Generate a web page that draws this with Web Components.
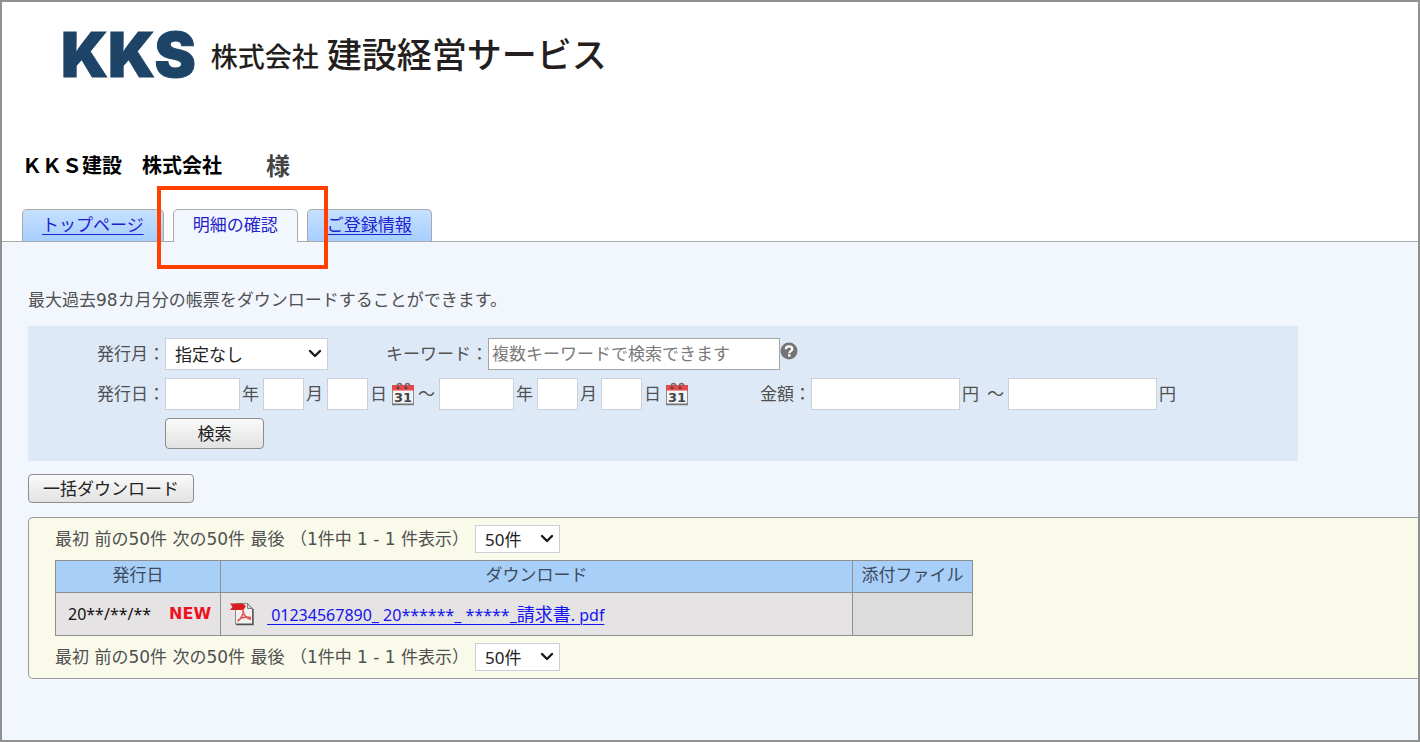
<!DOCTYPE html>
<html lang="ja">
<head>
<meta charset="utf-8">
<meta name="viewport" content="width=device-width, initial-scale=1">
<title>明細の確認</title>
<style>
  html, body { margin: 0; padding: 0; }
  body {
    --ui: "DejaVu Sans", "Noto Sans CJK JP", sans-serif;
    --latin: "Noto Sans", "Noto Sans CJK JP", sans-serif;
    font-family: var(--ui);
    font-size: 17px;
    line-height: 24px;
    color: #505050;
    background: #fff;
  }
</style>
</head>
<body>
<portal-page>
  <site-brand slot="header"></site-brand>
  <customer-name slot="header" name="ＫＫＳ建設　株式会社"></customer-name>
  <tab-bar slot="header">
    <tab-item href="#top">トップページ</tab-item>
    <tab-item href="#details" active>明細の確認</tab-item>
    <tab-item href="#account">ご登録情報</tab-item>
  </tab-bar>
  <p-note>最大過去98カ月分の帳票をダウンロードすることができます。</p-note>
  <search-panel></search-panel>
  <push-button>一括ダウンロード</push-button>
  <result-panel>
    <result-pager></result-pager>
    <result-table></result-table>
    <result-pager></result-pager>
  </result-panel>
</portal-page>

<script>
const define = (name, html, setup) => {
  const tpl = document.createElement('template');
  tpl.innerHTML = html;
  customElements.define(name, class extends HTMLElement {
    constructor() {
      super();
      this.attachShadow({ mode: 'open' }).append(tpl.content.cloneNode(true));
    }
    connectedCallback() { if (setup) setup(this, this.shadowRoot); }
  });
};

const selectCss = `
  .select { display: inline-grid; align-items: center; }
  .select > * { grid-area: 1 / 1; }
  .select svg { justify-self: end; margin-right: 6px; pointer-events: none; }
  select { appearance: none; box-sizing: border-box; margin: 0; padding: 0 9px; border: 1px solid #ccd0d6;
    border-radius: 0; background: #fff; color: #222; font: 17px var(--latin); }`;
const chevron = `<svg width="14" height="10" viewBox="0 0 14 10" aria-hidden="true"><path d="M2 2l5 5 5-5" fill="none" stroke="#1a1a1a" stroke-width="2.4" stroke-linecap="round" stroke-linejoin="round"/></svg>`;

define('portal-page', `
  <style>
    :host { display: flex; flex-direction: column; box-sizing: border-box; min-height: 100vh; border: 2px solid #919191; overflow-x: hidden; }
    header { padding: 24px 20px 0; border-bottom: 1px solid #a9a9a9; background: #fff; }
    main { flex: 1; display: flex; flex-direction: column; align-items: flex-start; padding: 46px 0 40px 26px; background: #f2f7fd; }
  </style>
  <header><slot name="header"></slot></header>
  <main><slot></slot></main>`);

define('site-brand', `
  <style>
    :host { display: flex; align-items: flex-start; padding-left: 39px; height: 64px; line-height: 60px; color: #231f20; white-space: nowrap; font-family: "Noto Sans CJK JP", sans-serif; font-weight: 500; }
    .mark { font-family: Inter, sans-serif; font-weight: 900; font-size: 62px; color: #1d4467; -webkit-text-stroke: 1px #1d4467; margin-right: 15px; }
    .kind { font-size: 27px; margin-right: 8px; }
    .name { font-size: 35px; }
    .mark, .name { line-height: 58px; }
    .name { line-height: 54px; }
  </style>
  <span class="mark">KKS</span><span class="kind">株式会社</span><span class="name">建設経営サービス</span>`);

define('customer-name', `
  <style>
    :host { display: flex; align-items: center; gap: 44px; height: 32px; margin-top: 59px; font-weight: 700; color: #000; font-family: "Noto Sans CJK JP", sans-serif; }
    .name { font-size: 20px; }
    .sama { font-size: 24px; color: #444; }
  </style>
  <span class="name"></span><span class="sama">様</span>`,
  (el, root) => { root.querySelector('.name').textContent = el.getAttribute('name'); });

define('tab-bar', `
  <style>
    :host { display: flex; gap: 9px; margin-top: 28px; }
  </style>
  <slot></slot>`);

define('tab-item', `
  <style>
    :host { display: block; position: relative; box-sizing: border-box; height: 32px; border: 1px solid #a9a9a9; border-bottom: 0;
      border-radius: 5px 5px 0 0; background: linear-gradient(#c6e0ff, #a6cfff); }
    :host([active]) { background: #f2f7fd; height: 33px; margin-bottom: -1px; }
    a { display: block; padding: 0 19px; line-height: 31px; color: #2222cc; text-decoration: underline; text-underline-offset: 3px; text-decoration-thickness: 1px; }
    :host([active]) a { text-decoration: none; }
    .mark { display: none; }
    :host([active]) .mark { display: block; position: absolute; z-index: 1; inset: -24px -31px -27px -17px; border: 4px solid #ff4000; pointer-events: none; }
  </style>
  <a><slot></slot></a><span class="mark"></span>`,
  (el, root) => { root.querySelector('a').href = el.getAttribute('href'); });

define('p-note', `
  <style>:host { display: block; margin-bottom: 14px; }</style>
  <slot></slot>`);

define('push-button', `
  <style>
    :host { display: block; margin: 13px 0 14px; }
    button { display: block; box-sizing: border-box; height: 29px; padding: 0 14px; border: 1px solid #8d8d8d; border-radius: 4px;
      background: linear-gradient(#fafafa, #e2e2e2); color: #222; font: 17px/24px var(--ui); }
  </style>
  <button type="button"><slot></slot></button>`);

define('calendar-icon', `
  <style>:host { display: block; } svg { display: block; }</style>
  <svg width="24" height="24" viewBox="0 0 24 24" aria-hidden="true">
    <rect x="1.5" y="4" width="21" height="18" fill="#f4f4f2" stroke="#8b8d90"/>
    <rect x="1" y="3" width="22" height="5.500" fill="#e4494c"/>
    <path d="M1 22.500h22" stroke="#76797c" stroke-width="1.500"/>
    <path d="M6.500 6V3.500a2 2 0 0 1 4 0V4M14.500 6V3.500a2 2 0 0 1 4 0V4" fill="none" stroke="#806060" stroke-width="1.600"/>
    <circle cx="7" cy="6" r="1.400" fill="#713a3c"/><circle cx="15" cy="6" r="1.400" fill="#713a3c"/>
    <text x="12" y="20" text-anchor="middle" font-family="DejaVu Sans, sans-serif" font-weight="700" font-size="13" fill="#404448">31</text>
  </svg>`);

define('help-icon', `
  <style>:host { display: block; } svg { display: block; }</style>
  <svg width="18" height="18" viewBox="0 0 18 18" aria-hidden="true">
    <circle cx="9" cy="9" r="8.500" fill="#747474"/>
    <path d="M5.800 7.200C5.800 3.400 12.300 3.500 12.300 7c0 2.100-3 2.200-3 4.200" fill="none" stroke="#fff" stroke-width="2.300"/>
    <rect x="8" y="12.300" width="2.500" height="2.300" fill="#fff"/>
  </svg>`);

define('search-panel', `
  <style>
    ${selectCss}
    :host { display: block; align-self: stretch; margin-right: 120px; background: #dde9f7; }
    form { display: grid; grid-template-columns: 137px auto; row-gap: 8px; justify-content: start; padding: 12px 0; white-space: nowrap; }
    .label { text-align: right; line-height: 32px; }
    .row { display: flex; align-items: center; }
    .unit { padding: 0 4px 0 2px; }
    .to { margin-left: 2px; }
    input, select { height: 32px; }
    input { box-sizing: border-box; margin: 0; border: 1px solid #ccd0d6; padding: 0 3px; background: #fff; color: #222; font: 17px var(--ui); }
    input::placeholder { color: #7a7a7a; opacity: 1; }
    select { width: 163px; }
    .year { width: 75px; } .md { width: 41px; } .money { width: 149px; }
    .keyword { width: 292px; border-color: #a5a5a5; }
    .gap-kw { margin-left: 58px; }
    .gap-money { margin-left: 70px; }
    .icon { padding: 0; border: 0; background: none; }
    .cal { margin-right: 1px; }
    .help { margin-bottom: 6px; }
    .search { box-sizing: border-box; width: 99px; height: 31px; border: 1px solid #8d8d8d; border-radius: 4px;
      background: linear-gradient(#fafafa, #e2e2e2); color: #222; font: 17px/24px var(--ui); }
  </style>
  <form>
    <label class="label" for="month">発行月：</label>
    <div class="row">
      <span class="select"><select id="month"><option>指定なし</option></select>${chevron}</span>
      <label class="gap-kw" for="kw">キーワード：</label>
      <input class="keyword" id="kw" type="text" placeholder="複数キーワードで検索できます">
      <button class="icon help" type="button" aria-label="ヘルプ"><help-icon></help-icon></button>
    </div>
    <label class="label" for="y1">発行日：</label>
    <div class="row">
      <input class="year" id="y1"><label class="unit" for="y1">年</label>
      <input class="md" id="m1"><label class="unit" for="m1">月</label>
      <input class="md" id="d1"><label class="unit" for="d1">日</label>
      <button class="icon cal" type="button" aria-label="開始日"><calendar-icon></calendar-icon></button>
      <span class="unit">～</span>
      <input class="year" id="y2"><label class="unit" for="y2">年</label>
      <input class="md" id="m2"><label class="unit" for="m2">月</label>
      <input class="md" id="d2"><label class="unit" for="d2">日</label>
      <button class="icon cal" type="button" aria-label="終了日"><calendar-icon></calendar-icon></button>
      <label class="gap-money" for="a1">金額：</label>
      <input class="money" id="a1"><label class="unit" for="a1">円</label>
      <span class="unit to">～</span>
      <input class="money" id="a2"><label class="unit" for="a2">円</label>
    </div>
    <span></span>
    <div class="row"><button class="search" type="button">検索</button></div>
  </form>`);

define('result-panel', `
  <style>
    :host { display: flex; flex-direction: column; gap: 7px; align-self: stretch; padding: 7px 0 7px 26px;
      border: 1px solid #9a9a9a; border-right: 0; border-radius: 5px 0 0 5px; background: #fafaeb; }
  </style>
  <slot></slot>`);

define('result-pager', `
  <style>
    ${selectCss}
    :host { display: flex; align-items: center; }
    select { width: 85px; height: 28px; }
    .range { margin-right: 6px; }
  </style>
  <span class="range">最初 前の50件 次の50件 最後 （1件中 1 - 1 件表示）</span>
  <span class="select"><select aria-label="表示件数"><option>50件</option></select>${chevron}</span>`);

define('pdf-icon', `
  <style>:host { display: block; } svg { display: block; }</style>
  <svg width="24" height="24" viewBox="0 0 24 24" aria-hidden="true">
    <path d="M5.500 1.500h12l5 5v15.500h-17z" fill="#f3f1f0" stroke="#8c8c8c"/>
    <path d="M6 22.500h17V7" fill="none" stroke="#505050" stroke-width="1.400"/>
    <path d="M17.500 1.500v5h5z" fill="#d0d0d0" stroke="#666" stroke-width=".8"/>
    <path d="M0 1.500h13l3 2.500-2.500 4H0l2.500-3z" fill="#d81e20"/>
    <path d="M13 7c1 5-2 10-5.500 12.500M13 9c1 5 4 7.500 8 8.500M8 18c4-3 8-3.500 13-2.500" fill="none" stroke="#e35658" stroke-width="1.500"/>
  </svg>`);

define('result-table', `
  <style>
    :host { display: block; }
    table { border-collapse: collapse; table-layout: fixed; width: 918px; }
    th, td { border: 1px solid #8f8f8f; padding: 0; font-weight: 400; }
    th { height: 32px; line-height: 24px; padding-bottom: 3px; box-sizing: border-box; background: #a8cff8; color: #3d4a5c; }
    td { height: 42px; background: #e6e3e4; }
    .date { width: 165px; } .file { width: 120px; }
    td.none { background: #dcdcdc; }
    .cell { display: flex; align-items: center; font-family: var(--latin); font-size: 16px; color: #111; white-space: nowrap; }
    .new { margin-left: 18px; font: 700 16px/24px var(--ui); color: #ee1122; }
    .day { padding-left: 12px; }
    .doc { gap: 13px; padding-left: 9px; }
    a { color: #1414f0; text-underline-offset: 3px; text-decoration-thickness: 1px; }
    .kind { font-size: 18px; }
  </style>
  <table>
    <thead><tr><th class="date">発行日</th><th>ダウンロード</th><th class="file">添付ファイル</th></tr></thead>
    <tbody><tr>
      <td><div class="cell day"><span>20**/**/**</span><span class="new">NEW</span></div></td>
      <td><div class="cell doc"><pdf-icon></pdf-icon><a href="#pdf">&nbsp;01234567890_ 20******_ *****_<span class="kind">請求書</span>. pdf</a></div></td>
      <td class="none"></td>
    </tr></tbody>
  </table>`);
</script>
</body>
</html>
